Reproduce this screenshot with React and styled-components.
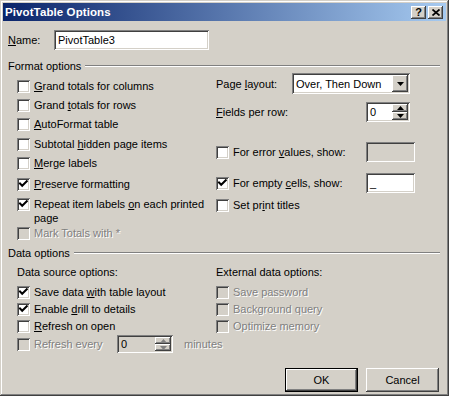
import React from 'react';
import styled, { createGlobalStyle, css } from 'styled-components';

const GlobalStyle = createGlobalStyle`
  body {
    margin: 0;
    background: #d4d0c8;
    font-family: "Liberation Sans", Arial, sans-serif;
    font-size: 11px;
    color: #000;
  }
`;

const raised = css`
  box-shadow: inset -1px -1px #404040, inset 1px 1px #fff,
    inset -2px -2px #808080, inset 2px 2px #d4d0c8;
`;

const sunken = css`
  box-shadow: inset 1px 1px #808080, inset -1px -1px #fff,
    inset 2px 2px #404040, inset -2px -2px #d4d0c8;
`;

function Check({ checked, disabled }) {
  return (
    <Box disabled={disabled}>
      {checked && (
        <svg width="13" height="13" viewBox="0 0 13 13">
          <path d="M3 5.5 L5.2 7.8 L9.8 3.2" fill="none" stroke="#000" strokeWidth="2" strokeLinecap="square" />
        </svg>
      )}
    </Box>
  );
}

function CheckItem({ h = 13, checked, disabled, children }) {
  return (
    <Row h={h}>
      <Check checked={checked} disabled={disabled} />
      <Label disabled={disabled}>{children}</Label>
    </Row>
  );
}

function Spin({ w, value, disabled }) {
  const fill = disabled ? '#808080' : '#000';
  return (
    <Field w={w} h={w > 50 ? 18 : 20} disabled={disabled}>
      <FieldText>{value}</FieldText>
      <SpinBtns>
        <SpinBtn>
          <svg width="7" height="4" viewBox="0 0 7 4"><path d="M3.5 0 L7 4 L0 4 Z" fill={fill} /></svg>
        </SpinBtn>
        <SpinBtn>
          <svg width="7" height="4" viewBox="0 0 7 4"><path d="M0 0 L7 0 L3.5 4 Z" fill={fill} /></svg>
        </SpinBtn>
      </SpinBtns>
    </Field>
  );
}

export default function App() {
  return (
    <>
      <GlobalStyle />
      <Window>
        <TitleBar>
          <Title>PivotTable Options</Title>
          <TitleBtn>?</TitleBtn>
          <TitleBtn>
            <svg width="8" height="7" viewBox="0 0 8 7">
              <path d="M0.5 0.5 L7.5 6.5 M7.5 0.5 L0.5 6.5" stroke="#000" strokeWidth="1.7" />
            </svg>
          </TitleBtn>
        </TitleBar>

        <Content>
          <NameRow>
            <NameLabel><U>N</U>ame:</NameLabel>
            <Field w={155} h={20}><FieldText>PivotTable3</FieldText></Field>
          </NameRow>

          <Header top={9}>Format options<Rule /></Header>

          <Grid top={1}>
            <LeftCol pad={7}>
              <CheckItem h={19}><U>G</U>rand totals for columns</CheckItem>
              <CheckItem h={19}>Grand <U>t</U>otals for rows</CheckItem>
              <CheckItem h={20}><U>A</U>utoFormat table</CheckItem>
              <CheckItem h={19}>Subtotal <U>h</U>idden page items</CheckItem>
              <CheckItem h={21}><U>M</U>erge labels</CheckItem>
              <CheckItem h={20} checked><U>P</U>reserve formatting</CheckItem>
              <CheckItem h={29} checked>Repeat item labels <U>o</U>n each printed page</CheckItem>
              <CheckItem disabled>Mark Totals with *</CheckItem>
            </LeftCol>

            <RightCol>
              <CtrlRow h={21}>
                <CtrlLabel w={76}>Page <U>l</U>ayout:</CtrlLabel>
                <Field w={118} h={21}>
                  <FieldText>Over, Then Down</FieldText>
                  <DropBtn>
                    <svg width="7" height="4" viewBox="0 0 7 4"><path d="M0 0 L7 0 L3.5 4 Z" fill="#000" /></svg>
                  </DropBtn>
                </Field>
              </CtrlRow>
              <CtrlRow h={20} top={8}>
                <CtrlLabel w={150}><U>F</U>ields per row:</CtrlLabel>
                <Spin w={44} value="0" />
              </CtrlRow>
              <CtrlRow h={20} top={20}>
                <CheckGroup w={150}>
                  <Check />
                  <Label>For error <U>v</U>alues, show:</Label>
                </CheckGroup>
                <Field w={49} h={20} disabled />
              </CtrlRow>
              <CtrlRow h={20} top={11}>
                <CheckGroup w={150}>
                  <Check checked />
                  <Label>For empty <U>c</U>ells, show:</Label>
                </CheckGroup>
                <Field w={49} h={20}><FieldText>_</FieldText></Field>
              </CtrlRow>
              <CtrlRow h={13} top={6}>
                <CheckGroup>
                  <Check />
                  <Label>Set pr<U>i</U>nt titles</Label>
                </CheckGroup>
              </CtrlRow>
            </RightCol>
          </Grid>

          <Header top={6}>Data options<Rule /></Header>

          <Grid top={7}>
            <LeftCol>
              <SubHead>Data source options:</SubHead>
              <List>
                <CheckItem h={17} checked>Save data <U>w</U>ith table layout</CheckItem>
                <CheckItem h={17} checked>Enable <U>d</U>rill to details</CheckItem>
                <CheckItem h={15}><U>R</U>efresh on open</CheckItem>
                <Row h={18} center>
                  <Check disabled />
                  <Label disabled w={83}>Refresh every</Label>
                  <Spin w={56} value="0" disabled />
                  <Label disabled gap={11} w={45}>minutes</Label>
                </Row>
              </List>
            </LeftCol>
            <RightCol>
              <SubHead>External data options:</SubHead>
              <List>
                <CheckItem h={17} disabled>Save password</CheckItem>
                <CheckItem h={17} disabled>Background query</CheckItem>
                <CheckItem h={15} disabled>Optimize memory</CheckItem>
              </List>
            </RightCol>
          </Grid>

          <Footer>
            <Button primary>OK</Button>
            <Button>Cancel</Button>
          </Footer>
        </Content>
      </Window>
    </>
  );
}

const Window = styled.div`
  width: 449px;
  height: 396px;
  box-sizing: border-box;
  padding: 3px;
  background: #d4d0c8;
  display: flex;
  flex-direction: column;
  box-shadow: inset -1px -1px #404040, inset 1px 1px #d4d0c8,
    inset -2px -2px #808080, inset 2px 2px #fff;
`;

const TitleBar = styled.div`
  height: 18px;
  display: flex;
  align-items: center;
  gap: 2px;
  padding: 0 3px 0 2px;
  background: linear-gradient(to right, #0a246a, #a6caf0);
`;

const Title = styled.div`
  flex: 1;
  color: #fff;
  font-weight: bold;
  font-size: 11.5px;
  letter-spacing: 0.1px;
`;

const TitleBtn = styled.div`
  width: 15px;
  height: 13px;
  ${raised};
  background: #d4d0c8;
  display: flex;
  align-items: center;
  justify-content: center;
  font-weight: bold;
  font-size: 11px;
`;

const Content = styled.div`
  flex: 1;
  display: flex;
  flex-direction: column;
  padding: 0 6px 0 5px;
`;

const NameRow = styled.div`
  display: flex;
  align-items: center;
  margin-top: 9px;
`;

const NameLabel = styled.span`
  width: 46px;
`;

const U = styled.span`
  text-decoration: underline;
`;

const Field = styled.div`
  width: ${(p) => p.w}px;
  height: ${(p) => p.h}px;
  flex: none;
  box-sizing: border-box;
  ${sunken};
  background: ${(p) => (p.disabled ? '#d4d0c8' : '#fff')};
  display: flex;
  align-items: center;
  padding: 2px;
`;

const FieldText = styled.span`
  flex: 1;
  padding-left: 2px;
  white-space: nowrap;
`;

const DropBtn = styled.div`
  width: 16px;
  height: 17px;
  ${raised};
  background: #d4d0c8;
  display: flex;
  align-items: center;
  justify-content: center;
`;

const SpinBtns = styled.div`
  width: 16px;
  align-self: stretch;
  display: flex;
  flex-direction: column;
`;

const SpinBtn = styled.div`
  flex: 1;
  ${raised};
  background: #d4d0c8;
  display: flex;
  align-items: center;
  justify-content: center;
`;

const Header = styled.div`
  display: flex;
  align-items: center;
  height: 13px;
  margin-top: ${(p) => p.top}px;
  white-space: nowrap;
`;

const Rule = styled.div`
  flex: 1;
  margin-left: 4px;
  border-top: 1px solid #808080;
  border-bottom: 1px solid #fff;
`;

const Grid = styled.div`
  display: grid;
  grid-template-columns: 208px 199px;
  margin-top: ${(p) => p.top}px;
`;

const LeftCol = styled.div`
  display: flex;
  flex-direction: column;
  padding: ${(p) => p.pad || 0}px 0 0 9px;
`;

const RightCol = styled.div`
  display: flex;
  flex-direction: column;
`;

const List = styled.div`
  display: flex;
  flex-direction: column;
  margin-top: 7px;
`;

const SubHead = styled.div`
  height: 13px;
  line-height: 13px;
`;

const Row = styled.div`
  display: flex;
  align-items: ${(p) => (p.center ? 'center' : 'flex-start')};
  height: ${(p) => p.h}px;
`;

const Box = styled.div`
  width: 13px;
  height: 13px;
  flex: none;
  box-sizing: border-box;
  ${sunken};
  background: ${(p) => (p.disabled ? '#d4d0c8' : '#fff')};
`;

const Label = styled.span`
  margin-left: ${(p) => (p.gap !== undefined ? p.gap : 4)}px;
  ${(p) => p.w && `width: ${p.w}px; flex: none; white-space: nowrap;`}
  line-height: 14px;
  margin-top: -1px;
  max-width: 172px;
  color: ${(p) => (p.disabled ? '#808080' : '#000')};
  text-shadow: ${(p) => (p.disabled ? '1px 1px #fff' : 'none')};
`;

const CtrlRow = styled.div`
  display: flex;
  align-items: center;
  height: ${(p) => p.h}px;
  margin-top: ${(p) => p.top || 0}px;
`;

const CtrlLabel = styled.span`
  width: ${(p) => p.w}px;
  flex: none;
`;

const CheckGroup = styled.div`
  display: flex;
  align-items: center;
  ${(p) => p.w && `width: ${p.w}px;`}
  flex: none;
`;

const Footer = styled.div`
  display: flex;
  justify-content: flex-end;
  gap: 8px;
  margin-top: 15px;
  padding-right: 1px;
`;

const Button = styled.div`
  width: 73px;
  height: 24px;
  box-sizing: border-box;
  display: flex;
  align-items: center;
  justify-content: center;
  background: #d4d0c8;
  ${(p) =>
    p.primary
      ? css`
          border: 1px solid #000;
          box-shadow: inset -1px -1px #404040, inset 1px 1px #fff,
            inset -2px -2px #808080;
        `
      : raised}
`;
